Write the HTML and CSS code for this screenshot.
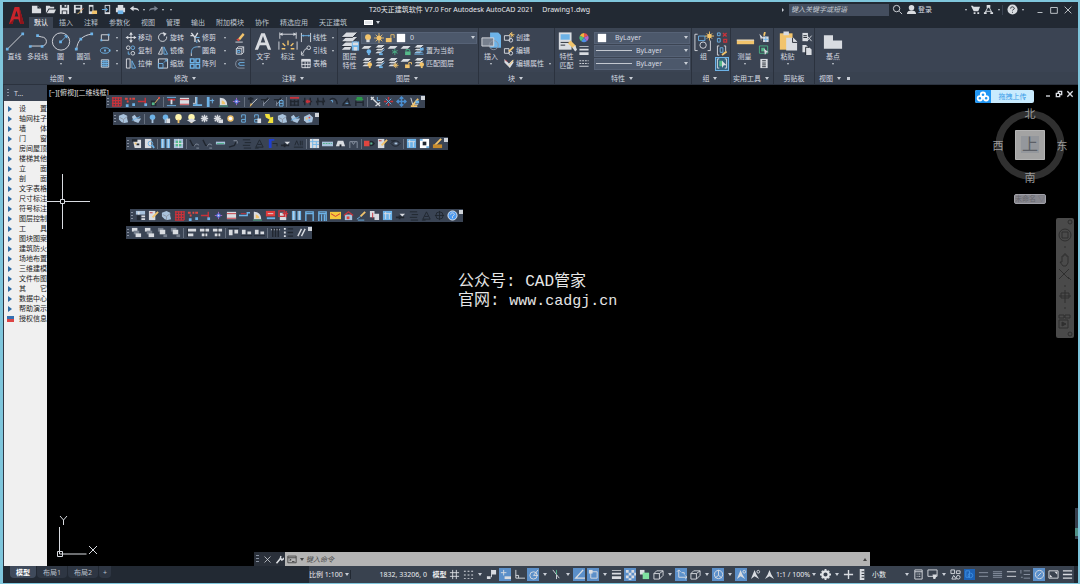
FILE: index.html
```html
<!DOCTYPE html>
<html lang="zh-CN">
<head>
<meta charset="utf-8">
<title>T20天正建筑软件 V7.0 For Autodesk AutoCAD 2021</title>
<link rel="stylesheet" href="styles.css">
</head>
<body>
<svg class="sprite" aria-hidden="true">
  <!-- files -->
  <symbol id="new" viewBox="0 0 12 12"><path class="w" d="M1 2h6l4 3v5H1z"/><path class="k" d="M7 2v3h4z"/></symbol>
  <symbol id="open" viewBox="0 0 12 12"><path class="w" d="M1 10V2h4l1 1h4v2H4zM4.500 6H12l-2 4H2z"/></symbol>
  <symbol id="save" viewBox="0 0 12 12"><path class="w" d="M1 1h10v10H1z"/><path class="k" d="M3 1h6v3H3zM3 7h6v4H3z"/><path class="w" d="M4 8h4v3H4zM6 1h2v2H6z"/></symbol>
  <symbol id="saveas" viewBox="0 0 12 12"><path class="w" d="M1 1h9v9H1z"/><path class="k" d="M3 2h5v2H3zM3 6h5v4H3z"/><path class="ys" d="M5 11l6-6"/><path class="rs" d="M10 6l1-1"/></symbol>
  <symbol id="webopen" viewBox="0 0 12 12"><path class="w" d="M2 1h5v10H2z"/><path class="k" d="M3 3h3v5H3z"/><path class="y" d="M6 7h5v4H5z"/></symbol>
  <symbol id="websave" viewBox="0 0 12 12"><path class="w" d="M4 1h6v10H4z"/><path class="k" d="M5 2h4v7H5z"/><path class="bs" d="M1 6h6M5 4l2 2-2 2"/></symbol>
  <symbol id="print" viewBox="0 0 12 12"><path class="w" d="M3 1h6v3H3zM1 4h10v5H1z"/><path class="b" d="M3 7h6v4H3z"/></symbol>
  <symbol id="undo" viewBox="0 0 12 12"><path class="w" d="M1 5l4-3v2c4 0 6 1 6 4-2-2-3-2-6-2v2z"/></symbol>
  <symbol id="redo" viewBox="0 0 12 12"><path class="d" d="M11 5L7 2v2C3 4 1 5 1 8c2-2 3-2 6-2v2z"/></symbol>
  <!-- title bar -->
  <symbol id="find" viewBox="0 0 12 12"><circle class="ws" cx="5" cy="5" r="3.500"/><path class="ws" d="M8 8l3 3"/></symbol>
  <symbol id="user" viewBox="0 0 12 12"><circle class="w" cx="6" cy="4" r="3"/><path class="w" d="M1 11c0-3 2-4 5-4s5 1 5 4z"/></symbol>
  <symbol id="cart" viewBox="0 0 12 12"><path class="w" d="M1 2h2l1 1h7L9 8H4zM4 9h2v2H4zM8 9h2v2H8z"/></symbol>
  <symbol id="auto" viewBox="0 0 12 12"><path class="ws" d="M6 2L2 10M6 2l4 8M3 8h6"/><path class="w" d="M4 1h4v3H4zM1 9h3v2H1zM8 9h3v2H8z"/></symbol>
  <symbol id="help" viewBox="0 0 12 12"><circle class="w" cx="6" cy="6" r="5.500"/><path class="ks" d="M4 5c0-3 4-2 4 0 0 1-2 1-2 2M6 8.500v1"/></symbol>
  <symbol id="min" viewBox="0 0 12 12"><path class="ws" d="M3 9h6"/></symbol>
  <symbol id="max" viewBox="0 0 12 12"><path class="ws" d="M2 3h8v7H2z"/></symbol>
  <symbol id="rest" viewBox="0 0 12 12"><path class="ws" d="M2 5h5v5H2zM5 4V2h5v5H8"/></symbol>
  <symbol id="close" viewBox="0 0 12 12"><path class="ws" d="M2 2l8 8M10 2l-8 8"/></symbol>
  <!-- draw -->
  <symbol id="line" viewBox="0 0 22 22"><path class="ws" d="M3 19L19 3"/><path class="b" d="M1 18h3v3H1zM18 1h3v3h-3z"/></symbol>
  <symbol id="pline" viewBox="0 0 22 22"><path class="ws" d="M3 16h12c7 0 7-10 0-10l-4-1"/><path class="b" d="M1 15h3v3H1zM9 3h3v3H9zM14 15h3v3h-3z"/></symbol>
  <symbol id="circle" viewBox="0 0 22 22"><circle class="ws" cx="11" cy="11" r="9.500"/><path class="bs" d="M11 11l5-5"/><path class="b" d="M9 10h3v3H9zM14 4h4v4z"/></symbol>
  <symbol id="arc" viewBox="0 0 22 22"><path class="ws" d="M3 20C3 10 10 4 19 3"/><path class="b" d="M1 18h3v3H1zM6 7h3v3H6zM18 1h3v3h-3z"/></symbol>
  <symbol id="rect" viewBox="0 0 12 12"><path class="ws" d="M2 3h8v6H2z"/><path class="b" d="M1 8h2v2H1zM9 2h2v2H9z"/></symbol>
  <symbol id="ellipse" viewBox="0 0 12 12"><ellipse class="bs" cx="6" cy="6" rx="5" ry="3"/><path class="b" d="M5 5h2v2H5zM10 5h2v2h-2z"/></symbol>
  <symbol id="hatch" viewBox="0 0 12 12"><path class="ws" d="M2 2h8v8H2z"/><path class="bs" d="M2 4h8M2 6h8M2 8h8M4 2v8M6 2v8M8 2v8"/></symbol>
  <!-- modify -->
  <symbol id="move" viewBox="0 0 12 12"><path class="ws" d="M6 1v10M1 6h10"/><path class="w" d="M6 0l2 3H4zM6 12l2-3H4zM0 6l3-2v4zM12 6L9 4v4z"/></symbol>
  <symbol id="rotate" viewBox="0 0 12 12"><path class="ws" d="M8 2a4.500 4.500 0 1 0 2 3"/><path class="w" d="M6 0l4 2-3 3z"/></symbol>
  <symbol id="trim" viewBox="0 0 12 12"><path class="ws" stroke-width="1.500" d="M2 1l4 5v5M9 1L6 6M9 8l2 3M1 4h3"/><path class="bs" d="M7 6h4M8 9v3"/></symbol>
  <symbol id="erase" viewBox="0 0 12 12"><path class="y" d="M4 7l5-6 2 2-5 6z"/><path class="r" d="M2 8l2-1 2 2-2 1z"/><path class="ws" d="M1 11h8"/></symbol>
  <symbol id="copy" viewBox="0 0 12 12"><circle class="ws" cx="3" cy="3" r="2"/><circle class="bs" cx="8" cy="3" r="2"/><circle class="ws" cx="8" cy="9" r="2"/><path class="bs" d="M3 7v3h2"/></symbol>
  <symbol id="mirror" viewBox="0 0 12 12"><path class="ws" d="M5 2v8H1z"/><path class="bs" d="M7 2v8h4z"/></symbol>
  <symbol id="fillet" viewBox="0 0 12 12"><path class="bs" d="M2 9c0-5 2-7 7-7"/><path class="ws" d="M2 12V9M9 2h3"/></symbol>
  <symbol id="explode" viewBox="0 0 12 12"><path class="ws" d="M2 4h6v6H2zM2 4l2-2h6v6L8 10M8 4l2-2"/><path class="bs" d="M3 6h3v2H3z"/></symbol>
  <symbol id="stretch" viewBox="0 0 12 12"><path class="ws" d="M1 1h4v10H1z"/><path class="bs" d="M7 3l4 8H7z"/></symbol>
  <symbol id="scale" viewBox="0 0 12 12"><path class="ws" d="M1 1h10v10H1z"/><path class="bs" d="M1 6h5v5H1zM7 5l3-3M8 2h2v2"/></symbol>
  <symbol id="array" viewBox="0 0 12 12"><path class="bs" stroke-width="1.500" d="M1 1h4v4H1zM7 1h4v4H7zM1 7h4v4H1zM7 7h4v4H7z"/></symbol>
  <symbol id="offset" viewBox="0 0 12 12"><path class="ds" d="M11 2H5C0 2 0 11 5 11h6"/><path class="bs" d="M11 5H6C4 5 4 8 6 8h5"/></symbol>
  <!-- annotate -->
  <symbol id="bigA" viewBox="0 0 22 22"><path class="w" d="M9 2h4l7 18h-3.500l-2-5H7.500l-2 5H2zM8.500 12h5L11 5z"/></symbol>
  <symbol id="dim" viewBox="0 0 22 22"><path class="ws" d="M2 1v7M20 1v7M2 3h18M1 20V11M21 20V11"/><path class="ys" stroke-width="1.500" d="M11 10v5M5 13l3 3M17 13l-3 3M4 19h4M14 19h4"/><path class="w" d="M2 3l3-2v4zM20 3l-3-2v4z"/></symbol>
  <symbol id="dimlin" viewBox="0 0 12 12"><path class="ws" d="M1 1v10M11 1v10"/><path class="bs" d="M1 4h10M3 3v2M9 3v2"/></symbol>
  <symbol id="leader" viewBox="0 0 12 12"><circle class="ws" cx="9" cy="3" r="2"/><path class="ws" d="M7 4C4 4 4 7 2 10M1 7v4h3"/></symbol>
  <symbol id="table" viewBox="0 0 12 12"><path class="w" d="M1 1h10v3H1z"/><path class="ws" d="M1.500 2h9v8.500h-9zM5 4v7M8 4v7M1 7h10"/></symbol>
  <!-- layers -->
  <symbol id="layers" viewBox="0 0 22 22"><path class="w" d="M7 1h12l-5 5H2zM7 6h12l-5 5H2zM7 11h12l-5 5H2zM7 15h6l-2 5H2z"/><path class="ks" d="M2 6.500h12l5-5M2 11.500h12l5-5M2 16.500h10"/><path class="b" d="M13 11h8v10h-8z"/><path class="w" d="M14 12h6v3h-6zM15 17h4v4h-4z"/></symbol>
  <symbol id="lay" viewBox="0 0 12 12"><path class="w" d="M4 0h7L8 3H1zM4 3h7L8 6H1zM4 6h5L7 9H1z"/><path class="ks" d="M1 3.500h7l2-2M1 6.500h7"/></symbol>
  <symbol id="lay-b" viewBox="0 0 12 12"><path class="w" d="M3 1h8L8 4H0z"/><circle class="b" cx="8" cy="7" r="2.500"/><path class="b" d="M7 9h2v2H7z"/></symbol>
  <symbol id="lay-m" viewBox="0 0 12 12"><use href="#lay"/><path class="bs" d="M6 9l5-4"/><path class="b" d="M5 9h4v2H5z"/></symbol>
  <symbol id="lay-f" viewBox="0 0 12 12"><path class="w" d="M3 1h8L8 4H0z"/><path class="gs" d="M8 4v7M5 6l6 3M11 6L5 9"/></symbol>
  <symbol id="lay-l" viewBox="0 0 12 12"><path class="w" d="M3 1h8L8 4H0z"/><path class="g" d="M5 7h6v4H5z"/><path class="gs" d="M6 7V5h4v2"/></symbol>
  <symbol id="lay-c" viewBox="0 0 12 12"><use href="#lay"/><path class="bs" d="M1 10h10M2 8h8"/><path class="b" d="M7 3h4v3H7z"/></symbol>
  <symbol id="lay-y" viewBox="0 0 12 12"><use href="#lay"/><circle class="y" cx="9" cy="7" r="2.500"/><path class="y" d="M8 9h2v2H8z"/></symbol>
  <symbol id="lay-s" viewBox="0 0 12 12"><use href="#lay"/><path class="ys" d="M9 5v6M6 8h6M7 6l4 4M11 6l-4 4"/></symbol>
  <symbol id="lay-u" viewBox="0 0 12 12"><path class="w" d="M3 1h8L8 4H0z"/><path class="y" d="M5 7h5v4H5z"/><path class="ys" d="M9 7V5h3v2"/></symbol>
  <symbol id="bulb" viewBox="0 0 12 12"><circle class="y" cx="6" cy="5" r="3.500"/><path class="w" d="M4 8h4v3H4z"/></symbol>
  <symbol id="sun" viewBox="0 0 12 12"><circle class="y" cx="6" cy="6" r="3"/><path class="ys" d="M6 0v12M0 6h12M2 2l8 8M10 2l-8 8"/></symbol>
  <symbol id="unlock" viewBox="0 0 12 12"><path class="y" d="M1 6h7v5H1z"/><path class="ys" d="M7 6V2h4v4"/></symbol>
  <symbol id="white" viewBox="0 0 12 12"><path fill="#fff" d="M1 1h10v10H1z"/></symbol>
  <!-- block -->
  <symbol id="insert" viewBox="0 0 22 22"><path class="b" d="M10 1h9l3 3v14H10z"/><path class="d" d="M1 7h13v9H1z"/><circle class="ds" cx="14" cy="15" r="5"/><path class="ws" d="M1 7h13v9H1z"/></symbol>
  <symbol id="create" viewBox="0 0 12 12"><path class="ws" d="M1 4h6v5H1z"/><circle class="ws" cx="8" cy="9" r="2"/><path class="ys" d="M9 0v6M6 3h6M7 1l4 4"/></symbol>
  <symbol id="edit" viewBox="0 0 12 12"><path class="ws" d="M1 4h5v5H1z"/><circle class="ws" cx="8" cy="9" r="2"/><path class="ys" stroke-width="2" d="M6 7l5-5"/></symbol>
  <symbol id="attr" viewBox="0 0 12 12"><path class="w" d="M1 1l5 5 4-4 1 3-4 6-6-6z"/><path class="ys" d="M6 8l5-6"/><path class="rs" d="M2 2l2 2"/></symbol>
  <!-- properties -->
  <symbol id="match" viewBox="0 0 22 22"><path class="w" d="M2 1h14v19H2z"/><path class="b" d="M4 3h10v6H4z"/><path class="ks" d="M4 12h10M4 15h5"/><path class="y" d="M12 13l3-3 6 6-3 3z"/><path class="w" d="M17 18l3-3 2 5-2 2z"/></symbol>
  <symbol id="wheel" viewBox="0 0 12 12"><path fill="#e8554d" d="M6 6V1a5 5 0 0 1 4.500 3z"/><path fill="#b565c9" d="M6 6l4.500-2A5 5 0 0 1 9 10z"/><path fill="#4f8fe6" d="M6 6l3 4a5 5 0 0 1-6 0z"/><path fill="#4fc27c" d="M6 6l-3 4A5 5 0 0 1 1.500 4z"/><path fill="#f0b63f" d="M6 6L1.500 4A5 5 0 0 1 6 1z"/></symbol>
  <symbol id="lw" viewBox="0 0 12 12"><path class="w" d="M1 1h10v1H1zM1 4h10v2H1zM1 8h10v3H1z"/></symbol>
  <symbol id="lt" viewBox="0 0 12 12"><path class="ws" stroke-dasharray="2 1" d="M1 3h10M1 6h10"/><path class="ws" d="M1 9h10"/></symbol>
  <!-- groups, utilities, clipboard, view -->
  <symbol id="group" viewBox="0 0 22 22"><path class="ws" d="M4 3H1v18h3M15 21h3V10"/><path class="bs" d="M5 5h7v5H5z"/><circle class="ws" cx="10" cy="15" r="3.500"/><path class="ys" d="M17 0v10M12 5h10M14 2l6 6M20 2l-6 6"/><circle class="y" cx="17" cy="5" r="2.500"/></symbol>
  <symbol id="ungroup" viewBox="0 0 12 12"><path class="bs" d="M1 1h3v3H1zM1 7h3v4H1z"/><path class="rs" stroke-width="1.500" d="M7 1l4 4M11 1L7 5M8 8h3v3H8z"/></symbol>
  <symbol id="gedit" viewBox="0 0 12 12"><path class="ws" d="M3 1H1v10h2M8 1h2v6"/><path class="bs" d="M4 3h3v5H4z"/><path class="ys" stroke-width="2" d="M6 11l5-4"/></symbol>
  <symbol id="gsel" viewBox="0 0 12 12"><path class="ws" d="M3 1H1v10h2M9 1h2v10H9"/><path class="g" d="M3 3h4v6H3z"/><path class="w" d="M6 3l5 5H8l-2 3z"/></symbol>
  <symbol id="ruler" viewBox="0 0 22 22"><path class="y" d="M2 9h19v5H2z"/><path class="w" d="M2 9h19v1H2z"/></symbol>
  <symbol id="qsel" viewBox="0 0 12 12"><path class="w" d="M1 2l5 5H3v3zM5 5h6v6H5z"/><path class="bs" d="M5 8h6M8 5v6"/><path class="ys" stroke-width="2" d="M7 0L6 4"/></symbol>
  <symbol id="selall" viewBox="0 0 12 12"><path class="gs" d="M1 1h9v8H1z"/><path class="g" d="M3 3h4v4H3z"/><path class="w" d="M6 4l5 4H9l-2 3z"/></symbol>
  <symbol id="calc" viewBox="0 0 12 12"><path class="w" d="M2 1h8v10H2z"/><path class="ks" d="M4 3h4M4 5.500h4M4 7.500h4M4 9.500h4"/></symbol>
  <symbol id="paste" viewBox="0 0 22 22"><path class="y" d="M2 2h14v18H2z"/><path class="w" d="M6 0h6v4H6zM9 7h8l4 4v10H9z"/><path class="ks" d="M16 7v5h5"/></symbol>
  <symbol id="cut" viewBox="0 0 12 12"><path class="w" d="M1 1h6v9H1z"/><path class="ks" d="M2 4h4M2 6h4"/><path class="ws" d="M6 4l5 6M11 4l-5 6"/></symbol>
  <symbol id="copyclip" viewBox="0 0 12 12"><path class="w" d="M1 0h4l2 2v6H1z"/><path class="w" d="M5 3h4l2 2v6H5z"/><path class="ks" d="M4.500 11V2.500H8"/></symbol>
  <symbol id="base" viewBox="0 0 22 22"><path class="w" d="M1 4h10v6h10v9H1z"/></symbol>
  <!-- floating toolbars -->
  <symbol id="t-grid" viewBox="0 0 12 12"><path class="rs" stroke-width="1.500" d="M1 2h10M1 5h10M1 8h10M1 11h10M2 1v10M5 1v10M8 1v10M11 1v10"/></symbol>
  <symbol id="t-col" viewBox="0 0 12 12"><path class="r" d="M1 2h3v2H1zM6 2h2v2H6zM9 2h3v2H9zM3 5h2v2H3z"/><path class="b" d="M2 9h3v3H2zM9 8h3v3H9z"/></symbol>
  <symbol id="t-col2" viewBox="0 0 12 12"><path class="rs" stroke-width="1.500" d="M1 6h8M9 2v8"/><path class="b" d="M8 8h3v3H8z"/></symbol>
  <symbol id="t-pick" viewBox="0 0 12 12"><path class="k" d="M1 5h6v6H1z"/><path class="ys" d="M5 8l5-6"/><path class="g" d="M2 7h3v3H2z"/><path class="r" d="M9 1h2v2H9z"/></symbol>
  <symbol id="t-wall" viewBox="0 0 12 12"><path class="bs" d="M1 1.500h10M1 10.500h10"/><path class="rs" stroke-width="2" d="M2 4h8"/><path class="w" d="M5 4h2v5H5z"/></symbol>
  <symbol id="t-box" viewBox="0 0 12 12"><path class="w" d="M1 2h10v8H1z"/><path class="rs" d="M1 4h10M1 9h10"/></symbol>
  <symbol id="t-perp" viewBox="0 0 12 12"><path class="bs" stroke-width="2" d="M1 10h10M5 1v9"/><path class="ws" d="M1 8h3V1"/></symbol>
  <symbol id="t-side" viewBox="0 0 12 12"><path class="b" d="M2 1h3v11H2z"/><path class="bs" d="M5 5h5M8 3v5"/></symbol>
  <symbol id="t-door" viewBox="0 0 12 12"><path class="w" d="M2 2c5 0 8 3 8 8H2z"/><path class="y" d="M4 5c2 0 4 2 4 4H4z"/><path class="gs" d="M1 11h10"/></symbol>
  <symbol id="t-node" viewBox="0 0 12 12"><path class="ps" d="M6 2v8M2 6h8"/><path fill="#4460e8" d="M4 4h4v4H4z"/><path class="w" d="M5 5h2v2H5z"/></symbol>
  <symbol id="t-brush" viewBox="0 0 12 12"><path class="ks" stroke-width="2" d="M1 3h6M4 1v6"/><path class="ws" d="M5 9l6-6"/><path class="y" d="M4 8l2 1-3 3z"/></symbol>
  <symbol id="t-brush2" viewBox="0 0 12 12"><path class="ks" stroke-width="1.500" d="M1 4h9M3 8l6-6"/><path class="ds" d="M4 9l6-6M4 11V6"/></symbol>
  <symbol id="t-brush3" viewBox="0 0 12 12"><use href="#t-brush2"/><path class="bs" d="M7 5h4v6H7zM7 8h4"/></symbol>
  <symbol id="t-dim" viewBox="0 0 12 12"><path class="rs" stroke-width="2" d="M1 2h10"/><path class="ks" stroke-width="1.500" d="M1 6h10M2 4v7M6 4v7M10 4v7M1 10h10"/></symbol>
  <symbol id="t-dimr" viewBox="0 0 12 12"><path class="ks" stroke-width="1.500" d="M1 6h10M3 2v8M9 2v8"/><path class="rs" stroke-width="2" d="M4 6h5M6 4v4"/></symbol>
  <symbol id="t-dimk" viewBox="0 0 12 12"><path class="ks" stroke-width="1.500" d="M1 6h10M3 2v8M9 2v8M4 4L2 8M10 4L8 8"/></symbol>
  <symbol id="t-arck" viewBox="0 0 12 12"><path class="ks" stroke-width="1.500" d="M2 4c3-3 8-1 8 5"/><path class="bs" d="M3 5h2v2"/></symbol>
  <symbol id="t-ang" viewBox="0 0 12 12"><path class="ks" stroke-width="1.500" d="M1 10h10M2 9l6-7M7 4c2 1 2 4 2 6"/><path class="bs" d="M5 8h3"/></symbol>
  <symbol id="t-green" viewBox="0 0 12 12"><path stroke="#2c9a4a" stroke-width="2" d="M2 4h8M3 2h6"/><path class="ks" stroke-width="1.500" d="M2 5v6M10 5v6M2 7h8"/></symbol>
  <symbol id="t-snap" viewBox="0 0 12 12"><path class="ws" stroke-width="1.500" d="M1 1l10 10M1 4l3-3M6 11l5-4"/><path class="bs" d="M8 1v4h3"/></symbol>
  <symbol id="t-flower" viewBox="0 0 12 12"><path class="rs" stroke-width="1.500" d="M6 1v3M1 6h3M11 6H8M6 11V8"/><path class="bs" d="M3 3l6 6M9 3l-6 6"/></symbol>
  <symbol id="t-move" viewBox="0 0 12 12"><path stroke="#4a8ed0" fill="none" stroke-width="1.500" d="M6 1v10M1 6h10M4 3l2-2 2 2M4 9l2 2 2-2M3 4L1 6l2 2M9 4l2 2-2 2"/></symbol>
  <symbol id="t-paint" viewBox="0 0 12 12"><path class="ws" d="M2 2l2 7h6"/><path class="ys" stroke-width="2" d="M4 10l6-7M2 11h7"/><path class="b" d="M7 5h4v3H7z"/></symbol>
  <symbol id="t-cube" viewBox="0 0 12 12"><path class="l" d="M1 3l5-2 4 2v3l1 4-4 1-3-1-3-3z"/><path class="ds" d="M2 5l4 2 4-3M6 7v4"/></symbol>
  <symbol id="t-swap" viewBox="0 0 12 12"><path class="l" d="M1 4l3-2 3 4h4L8 11 3 9z"/><path class="bs" d="M1 8l9-4"/></symbol>
  <symbol id="t-bulbb" viewBox="0 0 12 12"><circle class="b" cx="6" cy="4.500" r="3"/><path class="l" d="M5 7h2v4H5z"/></symbol>
  <symbol id="t-bulbp" viewBox="0 0 12 12"><use href="#t-bulbb"/><path class="w" d="M7 6h4v5H7z"/></symbol>
  <symbol id="t-bulby" viewBox="0 0 12 12"><circle fill="#fff6b0" cx="6" cy="4.500" r="3.500"/><path class="y" d="M5 7h2v4H5z"/></symbol>
  <symbol id="t-bulbl" viewBox="0 0 12 12"><use href="#t-bulby"/><path class="w" d="M1 8l5-2 5 2-5 3z"/></symbol>
  <symbol id="t-snow" viewBox="0 0 12 12"><path class="ws" stroke-width="1.500" d="M6 2v8M2 6h8M3 3l6 6M9 3l-6 6"/></symbol>
  <symbol id="t-snowp" viewBox="0 0 12 12"><use href="#t-snow"/><path class="w" d="M7 7h5v4H7z"/></symbol>
  <symbol id="t-sun" viewBox="0 0 12 12"><circle class="y" cx="6" cy="6" r="3.500"/><circle fill="#fff" cx="6" cy="6" r="2"/></symbol>
  <symbol id="t-lock" viewBox="0 0 12 12"><path class="bs" d="M4 5V2h4v8H4V7h4"/></symbol>
  <symbol id="t-lockp" viewBox="0 0 12 12"><use href="#t-lock"/><path class="w" d="M7 6h4v5H7z"/></symbol>
  <symbol id="t-key" viewBox="0 0 12 12"><path fill="#f2e23c" d="M1 1h5l1 4 3-1v7H4l2-4-4-2z"/></symbol>
  <symbol id="t-pal" viewBox="0 0 12 12"><path class="l" d="M1 4l6-3 4 4-1 5-6 1-3-3z"/><circle class="y" cx="4" cy="6" r="1"/><circle class="r" cx="7" cy="5" r="1"/><circle class="b" cx="7" cy="8" r="1"/></symbol>
  <symbol id="t-man" viewBox="0 0 12 12"><path class="w" d="M2 2h9v9H4z"/><path class="k" d="M1 1h6v3H1zM6 6h3v2H6z"/><path class="y" d="M4 5h2v2H4z"/></symbol>
  <symbol id="t-mgr" viewBox="0 0 12 12"><path class="l" d="M1 1h10v4H1z"/><path class="k" d="M2 6h4v5H2z"/><path class="w" d="M7 6h4v2H7zM7 9h4v2H7zM3 2h2v3H3z"/></symbol>
  <symbol id="t-zoom" viewBox="0 0 12 12"><path class="w" d="M1 1h7v10H1z"/><circle class="bs" cx="7" cy="6" r="2.500"/><path class="bs" stroke-width="2" d="M9 8l2 3"/></symbol>
  <symbol id="t-win" viewBox="0 0 12 12"><path class="b" d="M1 1h4v10H1zM7 1h4v10H7z"/><path class="ws" d="M3 1v10M9 1v10"/></symbol>
  <symbol id="t-wing" viewBox="0 0 12 12"><path class="l" d="M1 1h10v10H1z"/><path class="g" d="M3 3h6v6H3z"/><path class="ws" d="M1 6h10M6 1v10"/></symbol>
  <symbol id="t-st1" viewBox="0 0 12 12"><path class="ks" stroke-width="1.500" d="M1 2l3 6h3"/><path class="ds" d="M6 9c1-4 4-2 5-1M8 11h3"/></symbol>
  <symbol id="t-st2" viewBox="0 0 12 12"><path class="ks" stroke-width="1.500" d="M1 10l6-2 2-4 2-1"/><path class="ds" d="M6 3h4v3"/></symbol>
  <symbol id="t-beam" viewBox="0 0 12 12"><path class="l" d="M1 4h10v3H1z"/><path class="gs" d="M2 6h8"/></symbol>
  <symbol id="t-line" viewBox="0 0 12 12"><path class="bs" stroke-width="1.500" d="M0 6h9V3h3"/><path class="rs" d="M2 4h6"/></symbol>
  <symbol id="t-txt" viewBox="0 0 12 12"><path class="ks" d="M2 2h8M4 5h7M2 8h8M3 11h8"/></symbol>
  <symbol id="t-tri" viewBox="0 0 12 12"><path class="ks" d="M6 2L2 10h8zM4 7h4M1 11h4"/></symbol>
  <symbol id="t-blue" viewBox="0 0 12 12"><path fill="#1f3fd0" d="M2 1h6v2H5v8H2z"/><path class="ks" d="M6 6h5v3"/></symbol>
  <symbol id="t-pen" viewBox="0 0 12 12"><path class="ks" stroke-width="2" d="M1 8h9M5 10V6"/><path class="w" d="M5 4h6l-3 3z"/></symbol>
  <symbol id="t-ai" viewBox="0 0 12 12"><path class="ks" d="M2 8l2-5 2 5M8 3v5M10 3v5M1 10h10"/></symbol>
  <symbol id="t-tbl" viewBox="0 0 12 12"><path class="w" d="M1 1h10v10H1z"/><path class="bs" d="M1 4h10M4 1v10M4 7h7M8 4v7"/></symbol>
  <symbol id="t-strip" viewBox="0 0 12 12"><path class="l" d="M0 4h12v5H0z"/><path class="gs" stroke-dasharray="2 1" d="M1 6h10"/></symbol>
  <symbol id="t-roof" viewBox="0 0 12 12"><path class="w" d="M3 3h6l2 6H1z"/><path class="k" d="M5 7h2v3H5z"/></symbol>
  <symbol id="t-gate" viewBox="0 0 12 12"><path class="ds" d="M2 11V4h8v7M4 4l2 3 2-3"/></symbol>
  <symbol id="t-eyer" viewBox="0 0 12 12"><path class="ks" stroke-width="1.500" d="M4 6c2-3 5-3 7 0-2 3-5 3-7 0z"/><path class="r" d="M0 3h6v6H0z"/><path class="g" d="M7 5h2v2H7z"/></symbol>
  <symbol id="t-note" viewBox="0 0 12 12"><path class="w" d="M1 1h7v10H1z"/><path class="ys" stroke-width="2" d="M5 8l6-6"/><path class="rs" d="M2 3h3"/></symbol>
  <symbol id="t-eye" viewBox="0 0 12 12"><path class="ks" d="M1 6c3-4 7-4 10 0-3 4-7 4-10 0zM1 3h5"/><path class="l" d="M5 5h3v2H5z"/></symbol>
  <symbol id="t-blk" viewBox="0 0 12 12"><path class="b" d="M1 1h10v10H1z"/><path class="ws" d="M2 4h8M4 2v8M8 4v6"/></symbol>
  <symbol id="t-sq" viewBox="0 0 12 12"><path fill="#fff" d="M1 1h10v10H1z"/><path class="k" d="M4 4h4v4H4z"/><path class="b" d="M1 1h3v2H1zM8 9h3v2H8z"/></symbol>
  <symbol id="t-gold" viewBox="0 0 12 12"><path class="ys" stroke-width="2" d="M3 8l7-7"/><path fill="#c58a2c" d="M1 7h10v4H1z"/></symbol>
  <symbol id="t-red" viewBox="0 0 12 12"><path fill="#e03a3a" d="M1 1h10v6H1z"/><path class="ws" d="M3 4h6"/><path class="b" d="M2 8h9v2H2z"/></symbol>
  <symbol id="t-redp" viewBox="0 0 12 12"><path class="w" d="M2 3h7v8H2z"/><path class="rs" stroke-width="1.500" d="M1 1h6v6H1zM5 4h6M9 1v7"/></symbol>
  <symbol id="t-frame" viewBox="0 0 12 12"><path class="bs" stroke-width="1.500" d="M2 12V2h8v10M2 4h8"/></symbol>
  <symbol id="t-frame2" viewBox="0 0 12 12"><path class="bs" stroke-width="1.500" d="M2 12V2h8v10M5 5v7M8 5v7M2 4h8"/></symbol>
  <symbol id="t-mail" viewBox="0 0 12 12"><path fill="#f5c83c" d="M0 2h12v8H0z"/><path class="rs" d="M1 4l5 3 5-3"/></symbol>
  <symbol id="t-house" viewBox="0 0 12 12"><path class="l" d="M2 5h8v6H2z"/><path class="rs" stroke-width="1.500" d="M1 6l5-4 5 4"/><path class="r" d="M4 7h3v3H4z"/></symbol>
  <symbol id="t-pencil" viewBox="0 0 12 12"><path class="ys" stroke-width="2" d="M5 7l5-5"/><path class="bs" d="M1 10l4-3M2 11h7"/></symbol>
  <symbol id="t-pages" viewBox="0 0 12 12"><path class="w" d="M1 1h5v7H1zM6 4h5v7H6z"/><path class="rs" d="M4 3v6"/></symbol>
  <symbol id="t-q" viewBox="0 0 12 12"><circle fill="#4d9af0" stroke="#e6effb" cx="6" cy="6" r="5"/><path class="ws" d="M4 5c0-3 4-2 4 0L6 7v2"/></symbol>
  <symbol id="t-wheel" viewBox="0 0 12 12"><circle class="ks" cx="6" cy="6" r="4"/><path class="ks" d="M6 1v10M1 6h10"/></symbol>
  <symbol id="t-ordA" viewBox="0 0 12 12"><path class="w" d="M1 1h6v4H1z"/><path class="d" d="M3 4h6v4H3z"/><path class="w" d="M5 7h6v4H5z"/></symbol>
  <symbol id="t-ordB" viewBox="0 0 12 12"><path class="d" d="M1 1h6v4H1z"/><path class="w" d="M3 3h6v5H3z"/><path class="d" d="M7 8h4v3H7z"/></symbol>
  <symbol id="t-alL" viewBox="0 0 12 12"><path class="w" d="M2 2h9v3H2zM2 7h6v3H2z"/><path class="k" d="M1 1h1v10H1z"/></symbol>
  <symbol id="t-alC" viewBox="0 0 12 12"><path class="w" d="M1 2h10v3H1zM3 7h6v3H3z"/><path class="k" d="M6 0h1v12H6z"/></symbol>
  <symbol id="t-alT" viewBox="0 0 12 12"><path class="w" d="M1 3h4v6H1zM7 3h4v4H7z"/><path class="k" d="M0 1h12v1H0z"/></symbol>
  <symbol id="t-alB" viewBox="0 0 12 12"><path class="w" d="M1 3h4v5H1zM7 5h4v3H7z"/><path class="k" d="M0 9h12v1H0z"/></symbol>
  <symbol id="t-rows" viewBox="0 0 12 12"><path class="ws" stroke-dasharray="2 1" d="M1 3h10"/><path class="ks" stroke-width="1.500" d="M3 1v10M6 1v10M9 1v10"/></symbol>
  <symbol id="t-list" viewBox="0 0 12 12"><path class="w" d="M1 1h2v2H1zM1 5h2v2H1zM1 9h2v2H1z"/><path class="ks" stroke-width="1.500" d="M5 2h6M5 6h6M5 10h6"/></symbol>
  <symbol id="t-par" viewBox="0 0 12 12"><path class="ws" stroke-width="1.500" d="M2 10l4-8M6 10l4-8"/></symbol>
  <!-- status bar -->
  <symbol id="s-grid" viewBox="0 0 12 12"><path class="ws" d="M4 1v10M8 1v10M1 4h10M1 8h10"/></symbol>
  <symbol id="s-dots" viewBox="0 0 12 12"><path class="w" d="M1 2h2v1H1zM5 2h2v1H5zM9 2h2v1H9zM1 6h2v1H1zM5 6h2v1H5zM9 6h2v1H9zM1 10h2v1H1zM5 10h2v1H5zM9 10h2v1H9z"/></symbol>
  <symbol id="s-infer" viewBox="0 0 12 12"><path class="w" d="M1 8h4v3H1zM6 1h5v5H6z"/><path class="ws" d="M6 1v8"/></symbol>
  <symbol id="s-dyn" viewBox="0 0 12 12"><path class="ws" d="M1 4h6M4 1v6"/><path class="w" d="M5 8h7v3H5z"/></symbol>
  <symbol id="s-ortho" viewBox="0 0 12 12"><path class="ws" d="M2 1v9h10M2 7h3v3"/></symbol>
  <symbol id="s-polar" viewBox="0 0 12 12"><circle class="ws" cx="6" cy="7" r="4"/><path class="ws" d="M6 7l5-6M6 7h5"/></symbol>
  <symbol id="s-iso" viewBox="0 0 12 12"><path class="ws" d="M2 1l7 9M6 6v5"/><path class="gs" d="M6 1v5"/></symbol>
  <symbol id="s-track" viewBox="0 0 12 12"><path class="ws" stroke-width="1.500" d="M10 1L2 10h10"/></symbol>
  <symbol id="s-osnap" viewBox="0 0 12 12"><path class="ws" d="M3 3h7v7H3z"/><path class="w" d="M1 1h4v4H1z"/></symbol>
  <symbol id="s-lw" viewBox="0 0 12 12"><path class="w" d="M1 1h10v1H1zM1 4h10v2H1zM1 8h10v3H1z"/></symbol>
  <symbol id="s-trans" viewBox="0 0 12 12"><path class="w" d="M1 1h3v3H1zM7 1h3v3H7zM4 4h3v3H4zM10 4h2v3h-2zM1 7h3v3H1zM7 7h3v3H7zM4 10h3v2H4z"/></symbol>
  <symbol id="s-cyc" viewBox="0 0 12 12"><path class="w" d="M1 1h5v5H1z"/><path fill="#7fe0a0" d="M4 4h7v7H4z"/></symbol>
  <symbol id="s-cube" viewBox="0 0 12 12"><path class="ws" d="M1 5h6v6H1zM1 5l3-3h7v5l-4 4M7 5l4-3"/></symbol>
  <symbol id="s-ucs" viewBox="0 0 12 12"><path class="ws" d="M3 1v8h9M1 3l2-2 2 2M10 7l2 2-2 2M6 4h3v2"/></symbol>
  <symbol id="s-giz" viewBox="0 0 12 12"><circle class="ws" cx="6" cy="6" r="4.500"/><path class="ws" d="M6 1v6l-4 3M6 7l4 3"/></symbol>
  <symbol id="s-ann" viewBox="0 0 12 12"><path class="w" d="M6 1l2 5 3 5-5-3-5 3 3-5z"/></symbol>
  <symbol id="s-annp" viewBox="0 0 12 12"><path class="w" d="M5 1l2 5 3 5-5-3-4 3 2-5z"/><circle class="ws" cx="9" cy="3" r="1.500"/></symbol>
  <symbol id="s-gear" viewBox="0 0 12 12"><circle cx="6" cy="6" r="3.500" fill="none" stroke="#e2e5e9" stroke-width="2.500"/><path stroke="#e2e5e9" stroke-width="2" d="M6 0v2M6 10v2M0 6h2M10 6h2M2 2l1 1M9 9l1 1M10 2L9 3M3 9l-1 1"/></symbol>
  <symbol id="s-plus" viewBox="0 0 12 12"><path class="ws" stroke-width="1.500" d="M6 1v10M1 6h10"/></symbol>
  <symbol id="s-unit" viewBox="0 0 12 12"><path class="w" d="M3 0h5v12H3z"/><path class="ks" d="M5 3h3M5 6h3M5 9h3"/></symbol>
  <symbol id="s-prop" viewBox="0 0 12 12"><path class="ws" d="M2 1h8v10H2zM2 3h8M4 5.500h1M6 5.500h2M4 8h1M6 8h2"/></symbol>
  <symbol id="s-ui" viewBox="0 0 12 12"><path class="ws" d="M1 1h10v7H1z"/><path class="w" d="M6 6h5l-2 5H7z"/></symbol>
  <symbol id="s-iso2" viewBox="0 0 12 12"><path class="ws" d="M1 1h4v4H1zM7 2h4v3H7zM4 7l3 4H2z"/><circle class="ws" cx="9" cy="9" r="2"/></symbol>
  <symbol id="s-hw" viewBox="0 0 12 12"><path fill="#1d62b5" d="M0 0h12v12H0z"/><path stroke="#3f8fe0" fill="none" d="M2 2h4v7H2z"/><circle stroke="#3f8fe0" fill="none" cx="7" cy="7" r="2.500"/></symbol>
  <symbol id="s-l2" viewBox="0 0 12 12"><path class="ds" d="M1 4h10M1 8h10"/></symbol>
  <symbol id="s-l4" viewBox="0 0 12 12"><path class="ds" d="M1 3h10M1 5h10M1 7h10M1 9h10"/></symbol>
  <symbol id="s-l3" viewBox="0 0 12 12"><path class="ws" d="M1 3h10M1 8h10"/></symbol>
  <symbol id="s-lx" viewBox="0 0 12 12"><path class="ds" d="M4 2h7M4 6h7M4 10h7M1 1v4M1 9h2"/></symbol>
  <symbol id="s-clean" viewBox="0 0 12 12"><circle class="ws" cx="6" cy="6" r="4.500"/><path class="ws" d="M4 8l4-4"/></symbol>
  <symbol id="s-full" viewBox="0 0 12 12"><path class="ws" d="M1 2h10v8H1z"/><path class="w" d="M7 3h3v3zM2 9h3L2 6z"/></symbol>
  <symbol id="s-menu" viewBox="0 0 12 12"><path class="ws" stroke-width="1.500" d="M1 2h10M1 6h10M1 10h10"/></symbol>
</svg>

<div class="window">
  <header class="head">
    <button class="logo" aria-label="应用程序菜单"><svg viewBox="0 0 16 20"><path fill="#c8242b" d="M0 19L6 1h5l5 18h-4l-2-5H5l-1 5z"/><path fill="#222933" d="M6 11l2-6 2 6z"/><path fill="#8c151b" d="M0 19l5-5-1 5zM11 1l5 18h-4z"/></svg></button>
    <div class="titlebar">
      <nav class="quick" aria-label="快速访问">
        <button aria-label="新建"><svg><use href="#new"/></svg></button><button aria-label="打开"><svg><use href="#open"/></svg></button><button aria-label="保存"><svg><use href="#save"/></svg></button><button aria-label="另存为"><svg><use href="#saveas"/></svg></button><button aria-label="从网络打开"><svg><use href="#webopen"/></svg></button><button aria-label="保存到网络"><svg><use href="#websave"/></svg></button><button aria-label="打印"><svg><use href="#print"/></svg></button><button aria-label="放弃"><svg><use href="#undo"/></svg></button><i class="dn"></i><button aria-label="重做"><svg><use href="#redo"/></svg></button><i class="dn"></i><i class="dn wide"></i>
      </nav>
      <h1 class="title"><span>T20天正建筑软件 V7.0 For Autodesk AutoCAD 2021</span><span>Drawing1.dwg</span></h1>
      <div class="account">
        <i class="rt"></i><input class="search" type="text" placeholder="键入关键字或短语" aria-label="搜索">
        <button aria-label="查找"><svg><use href="#find"/></svg></button>
        <button class="login"><svg><use href="#user"/></svg>登录</button>
        <i class="dn"></i><button aria-label="商店"><svg><use href="#cart"/></svg></button><button aria-label="Autodesk"><svg><use href="#auto"/></svg></button><i class="dn"></i><span class="vsep"></span><button class="mid" aria-label="帮助"><svg><use href="#help"/></svg></button><i class="dn"></i>
      </div>
      <div class="wbtns"><button aria-label="最小化"><svg><use href="#min"/></svg></button><button aria-label="最大化"><svg><use href="#max"/></svg></button><button aria-label="关闭"><svg><use href="#close"/></svg></button></div>
    </div>
    <nav class="tabs" aria-label="功能区">
      <button class="on">默认</button><button>插入</button><button>注释</button><button>参数化</button><button>视图</button><button>管理</button><button>输出</button><button>附加模块</button><button>协作</button><button>精选应用</button><button>天正建筑</button><button class="media" aria-label="显示选项"><b></b><i class="dn"></i></button>
    </nav>
  </header>

  <section class="ribbon">
    <section class="panel p-draw">
      <div class="tools">
        <button class="big"><svg><use href="#line"/></svg>直线</button><button class="big"><svg><use href="#pline"/></svg>多段线</button><button class="big"><svg><use href="#circle"/></svg>圆<i class="dn"></i></button><button class="big"><svg><use href="#arc"/></svg>圆弧<i class="dn"></i></button>
        <div class="col"><button aria-label="矩形"><svg><use href="#rect"/></svg><i class="dn"></i></button><button aria-label="椭圆"><svg><use href="#ellipse"/></svg><i class="dn"></i></button><button aria-label="图案填充"><svg><use href="#hatch"/></svg><i class="dn"></i></button></div>
      </div><h2>绘图<i class="dn"></i></h2>
    </section>
    <section class="panel p-mod">
      <div class="tools">
        <div class="col"><button><svg><use href="#move"/></svg>移动</button><button><svg><use href="#copy"/></svg>复制</button><button><svg><use href="#stretch"/></svg>拉伸</button></div>
        <div class="col"><button><svg><use href="#rotate"/></svg>旋转</button><button><svg><use href="#mirror"/></svg>镜像</button><button><svg><use href="#scale"/></svg>缩放</button></div>
        <div class="col"><button><svg><use href="#trim"/></svg>修剪<i class="dn far"></i></button><button><svg><use href="#fillet"/></svg>圆角<i class="dn far"></i></button><button><svg><use href="#array"/></svg>阵列<i class="dn far"></i></button></div>
        <div class="col"><button aria-label="删除"><svg><use href="#erase"/></svg></button><button aria-label="分解"><svg><use href="#explode"/></svg></button><button aria-label="偏移"><svg><use href="#offset"/></svg></button></div>
      </div><h2>修改<i class="dn"></i></h2>
    </section>
    <section class="panel p-ann">
      <div class="tools">
        <button class="big"><svg><use href="#bigA"/></svg>文字<i class="dn"></i></button><button class="big"><svg><use href="#dim"/></svg>标注</button>
        <div class="col"><button><svg><use href="#dimlin"/></svg>线性<i class="dn"></i></button><button><svg><use href="#leader"/></svg>引线<i class="dn"></i></button><button><svg><use href="#table"/></svg>表格</button></div>
      </div><h2>注释<i class="dn"></i></h2>
    </section>
    <section class="panel p-lay">
      <div class="tools">
        <button class="big"><svg><use href="#layers"/></svg>图层<br>特性</button>
        <div class="col grow">
          <div class="combo"><svg><use href="#bulb"/></svg><svg><use href="#sun"/></svg><svg><use href="#unlock"/></svg><svg><use href="#white"/></svg><select aria-label="图层"><option>0</option></select><i class="dn"></i></div>
          <div class="icons"><button aria-label="关闭图层"><svg><use href="#lay-b"/></svg></button><button aria-label="隔离"><svg><use href="#lay-m"/></svg></button><button aria-label="冻结"><svg><use href="#lay-f"/></svg></button><button aria-label="锁定"><svg><use href="#lay-l"/></svg></button><button><svg><use href="#lay-c"/></svg>置为当前</button></div>
          <div class="icons"><button aria-label="打开所有图层"><svg><use href="#lay-y"/></svg></button><button aria-label="取消隔离"><svg><use href="#lay-m"/></svg></button><button aria-label="解冻"><svg><use href="#lay-s"/></svg></button><button aria-label="解锁"><svg><use href="#lay-u"/></svg></button><button><svg><use href="#lay-y"/></svg>匹配图层</button></div>
        </div>
      </div><h2>图层<i class="dn"></i></h2>
    </section>
    <section class="panel p-blk">
      <div class="tools">
        <button class="big"><svg><use href="#insert"/></svg>插入<i class="dn"></i></button>
        <div class="col"><button><svg><use href="#create"/></svg>创建</button><button><svg><use href="#edit"/></svg>编辑</button><button><svg><use href="#attr"/></svg>编辑属性<i class="dn"></i></button></div>
      </div><h2>块<i class="dn"></i></h2>
    </section>
    <section class="panel p-prop">
      <div class="tools">
        <button class="big"><svg><use href="#match"/></svg>特性<br>匹配</button>
        <div class="col grow">
          <div class="prop"><svg><use href="#wheel"/></svg><div class="combo"><svg><use href="#white"/></svg><select aria-label="对象颜色"><option>ByLayer</option></select><i class="dn"></i></div></div>
          <div class="prop"><svg><use href="#lw"/></svg><div class="combo"><span class="rule"></span><select aria-label="线宽"><option>ByLayer</option></select><i class="dn"></i></div></div>
          <div class="prop"><svg><use href="#lt"/></svg><div class="combo"><span class="rule"></span><select aria-label="线型"><option>ByLayer</option></select><i class="dn"></i></div></div>
        </div>
      </div><h2>特性<i class="dn"></i></h2>
    </section>
    <section class="panel p-grp">
      <div class="tools">
        <button class="big"><svg><use href="#group"/></svg>组</button>
        <div class="col"><button aria-label="解除编组"><svg><use href="#ungroup"/></svg></button><button aria-label="组编辑"><svg><use href="#gedit"/></svg></button><button class="sel" aria-label="启用组选择"><svg><use href="#gsel"/></svg></button></div>
      </div><h2>组<i class="dn"></i></h2>
    </section>
    <section class="panel p-util">
      <div class="tools">
        <button class="big"><svg><use href="#ruler"/></svg>测量<i class="dn"></i></button>
        <div class="col"><button aria-label="快速选择"><svg><use href="#qsel"/></svg></button><button aria-label="全部选择"><svg><use href="#selall"/></svg></button><button aria-label="计算器"><svg><use href="#calc"/></svg></button></div>
      </div><h2>实用工具<i class="dn"></i></h2>
    </section>
    <section class="panel p-clip">
      <div class="tools">
        <button class="big"><svg><use href="#paste"/></svg>粘贴<i class="dn"></i></button>
        <div class="col"><button aria-label="剪切"><svg><use href="#cut"/></svg></button><button aria-label="复制到剪贴板"><svg><use href="#copyclip"/></svg></button></div>
      </div><h2>剪贴板</h2>
    </section>
    <section class="panel p-view">
      <div class="tools"><button class="big"><svg><use href="#base"/></svg>基点<i class="dn"></i></button></div><h2>视图<i class="dn"></i><i class="corner"></i></h2>
    </section>
  </section>

  <main class="work">
    <aside class="palette">
      <h2><span class="grip"></span>T...</h2>
      <ul>
        <li><button>设 置</button></li><li><button>轴网柱子</button></li><li><button>墙 体</button></li><li><button>门 窗</button></li><li><button>房间屋顶</button></li><li><button>楼梯其他</button></li><li><button>立 面</button></li><li><button>剖 面</button></li><li><button>文字表格</button></li><li><button>尺寸标注</button></li><li><button>符号标注</button></li><li><button>图层控制</button></li><li><button>工 具</button></li><li><button>图块图案</button></li><li><button>建筑防火</button></li><li><button>场地布置</button></li><li><button>三维建模</button></li><li><button>文件布图</button></li><li><button>其 它</button></li><li><button>数据中心</button></li><li><button>帮助演示</button></li><li class="auth"><button>授权信息</button></li>
      </ul>
    </aside>

    <div class="canvas">
      <p class="vplabel">[−][俯视][二维线框]</p>

      <div class="bar b1"><span class="grip"></span>
        <button aria-label="绘制轴网"><svg><use href="#t-grid"/></svg></button><button aria-label="轴网标注"><svg><use href="#t-col"/></svg></button><button aria-label="添补轴号"><svg><use href="#t-col2"/></svg></button><button aria-label="标准柱"><svg><use href="#t-pick"/></svg></button><hr>
        <button aria-label="绘制墙体"><svg><use href="#t-wall"/></svg></button><button aria-label="等分加墙"><svg><use href="#t-box"/></svg></button><button aria-label="净距偏移"><svg><use href="#t-perp"/></svg></button><button aria-label="边线对齐"><svg><use href="#t-side"/></svg></button><button aria-label="门窗"><svg><use href="#t-door"/></svg></button><button aria-label="节点"><svg><use href="#t-node"/></svg></button><hr>
        <button aria-label="格式刷"><svg><use href="#t-brush"/></svg></button><button aria-label="修墙角"><svg><use href="#t-brush2"/></svg></button><button aria-label="倒墙角"><svg><use href="#t-brush3"/></svg></button><hr>
        <button aria-label="门窗标注"><svg><use href="#t-dim"/></svg></button><button aria-label="墙厚标注"><svg><use href="#t-dimr"/></svg></button><button aria-label="逐点标注"><svg><use href="#t-dimk"/></svg></button><button aria-label="弧长标注"><svg><use href="#t-arck"/></svg></button><button aria-label="角度标注"><svg><use href="#t-ang"/></svg></button><button aria-label="快速标注"><svg><use href="#t-green"/></svg></button><hr>
        <button aria-label="自由移动"><svg><use href="#t-snap"/></svg></button><button aria-label="自由复制"><svg><use href="#t-flower"/></svg></button><button aria-label="移位"><svg><use href="#t-move"/></svg></button><button aria-label="对象编辑"><svg><use href="#t-paint"/></svg></button><button class="x" aria-label="关闭"></button>
      </div>

      <div class="bar b2"><span class="grip"></span>
        <button aria-label="图层管理"><svg><use href="#t-cube"/></svg></button><button aria-label="图层转换"><svg><use href="#t-swap"/></svg></button><hr>
        <button aria-label="关闭图层"><svg><use href="#t-bulbb"/></svg></button><button aria-label="关闭其它"><svg><use href="#t-bulbp"/></svg></button><button aria-label="打开图层"><svg><use href="#t-bulby"/></svg></button><button aria-label="图层全开"><svg><use href="#t-bulbl"/></svg></button><button aria-label="冻结图层"><svg><use href="#t-snow"/></svg></button><button aria-label="冻结其它"><svg><use href="#t-snowp"/></svg></button><button aria-label="解冻图层"><svg><use href="#t-sun"/></svg></button><button aria-label="锁定图层"><svg><use href="#t-lock"/></svg></button><button aria-label="锁定其它"><svg><use href="#t-lockp"/></svg></button><button aria-label="解锁图层"><svg><use href="#t-key"/></svg></button><button aria-label="合并图层"><svg><use href="#t-cube"/></svg></button><button aria-label="图层恢复"><svg><use href="#t-swap"/></svg></button><button aria-label="图元改层"><svg><use href="#t-pal"/></svg></button><button class="x" aria-label="关闭"></button>
      </div>

      <div class="bar b3"><span class="grip"></span>
        <button aria-label="设置"><svg><use href="#t-man"/></svg></button><button aria-label="查找"><svg><use href="#t-zoom"/></svg></button><hr>
        <button aria-label="门窗"><svg><use href="#t-win"/></svg></button><button aria-label="组合门窗"><svg><use href="#t-wing"/></svg></button><hr>
        <button aria-label="直线梯段"><svg><use href="#t-st1"/></svg></button><button aria-label="圆弧梯段"><svg><use href="#t-st1"/></svg></button><button aria-label="阳台"><svg><use href="#t-beam"/></svg></button><button aria-label="坡道"><svg><use href="#t-st2"/></svg></button><button aria-label="多行文字"><svg><use href="#t-txt"/></svg></button><button aria-label="标高"><svg><use href="#t-tri"/></svg></button><button aria-label="剖切"><svg><use href="#t-blue"/></svg></button><button aria-label="引出标注"><svg><use href="#t-pen"/></svg></button><button aria-label="图名标注"><svg><use href="#t-ai"/></svg></button><hr>
        <button aria-label="新建表格"><svg><use href="#t-tbl"/></svg></button><button aria-label="单元编辑"><svg><use href="#t-strip"/></svg></button><button aria-label="屋顶"><svg><use href="#t-roof"/></svg></button><button aria-label="门套"><svg><use href="#t-gate"/></svg></button><hr>
        <button aria-label="局部隐藏"><svg><use href="#t-eyer"/></svg></button><button aria-label="编辑"><svg><use href="#t-note"/></svg></button><button aria-label="恢复可见"><svg><use href="#t-eye"/></svg></button><hr>
        <button aria-label="图块"><svg><use href="#t-blk"/></svg></button><button aria-label="图框"><svg><use href="#t-sq"/></svg></button><button aria-label="清理"><svg><use href="#t-gold"/></svg></button><button class="x" aria-label="关闭"></button>
      </div>

      <div class="bar b4"><span class="grip"></span>
        <button aria-label="工程管理"><svg><use href="#t-mgr"/></svg></button><button aria-label="图纸编辑"><svg><use href="#t-note"/></svg></button><button aria-label="图层"><svg><use href="#t-cube"/></svg></button><button aria-label="轴网"><svg><use href="#t-grid"/></svg></button><button aria-label="轴标"><svg><use href="#t-col"/></svg></button><button aria-label="单轴标"><svg><use href="#t-col2"/></svg></button><button aria-label="柱子"><svg><use href="#t-node"/></svg></button><button aria-label="墙体"><svg><use href="#t-box"/></svg></button><button aria-label="单线变墙"><svg><use href="#t-line"/></svg></button><button aria-label="平开门"><svg><use href="#t-door"/></svg></button><button aria-label="门窗编号"><svg><use href="#t-red"/></svg></button><button aria-label="门窗检查"><svg><use href="#t-redp"/></svg></button><button aria-label="双窗"><svg><use href="#t-win"/></svg></button><button aria-label="门口线"><svg><use href="#t-frame"/></svg></button><button aria-label="装饰套"><svg><use href="#t-frame2"/></svg></button><button aria-label="房间"><svg><use href="#t-mail"/></svg></button><button aria-label="房屋"><svg><use href="#t-house"/></svg></button><button aria-label="铅笔"><svg><use href="#t-pencil"/></svg></button><button aria-label="图纸"><svg><use href="#t-pages"/></svg></button><button aria-label="插图"><svg><use href="#t-blk"/></svg></button><button aria-label="引出"><svg><use href="#t-pen"/></svg></button><button aria-label="做法"><svg><use href="#t-txt"/></svg></button><button aria-label="索引"><svg><use href="#t-tri"/></svg></button><button aria-label="指北针"><svg><use href="#t-wheel"/></svg></button><button aria-label="帮助"><svg><use href="#t-q"/></svg></button><button class="x" aria-label="关闭"></button>
      </div>

      <div class="bar b5"><span class="grip"></span>
        <button aria-label="前置"><svg><use href="#t-ordA"/></svg></button><button aria-label="后置"><svg><use href="#t-ordA"/></svg></button><button aria-label="置于对象之上"><svg><use href="#t-ordB"/></svg></button><button aria-label="置于对象之下"><svg><use href="#t-ordB"/></svg></button><hr>
        <button aria-label="左对齐"><svg><use href="#t-alL"/></svg></button><button aria-label="居中"><svg><use href="#t-alC"/></svg></button><button aria-label="右对齐"><svg><use href="#t-alC"/></svg></button><hr>
        <button aria-label="顶对齐"><svg><use href="#t-alT"/></svg></button><button aria-label="底对齐"><svg><use href="#t-alB"/></svg></button><button aria-label="中线对齐"><svg><use href="#t-alB"/></svg></button><hr>
        <button aria-label="等距"><svg><use href="#t-rows"/></svg></button><button aria-label="列表"><svg><use href="#t-list"/></svg></button><button aria-label="平行"><svg><use href="#t-par"/></svg></button><button class="x" aria-label="关闭"></button>
      </div>

      <svg class="cross" viewBox="0 0 44 56"><path class="ws" d="M0 27.500h13M18 27.500h25M15.500 0v25M15.500 30v25M13.500 25.500h4v4h-4z"/></svg>

      <div class="note"><p>公众号: CAD管家</p><p>官网: <span>www.cadgj.cn</span></p></div>

      <svg class="ucs" viewBox="0 0 44 46"><path class="ws" d="M3.500 12v27h27M1.500 36.500h5v5h-5zM4 1l3.500 4L11 1M7.500 5v5M33 31l8 8M41 31l-8 8"/></svg>

      <button class="upload"><svg viewBox="0 0 18 14"><circle cx="9" cy="5" r="2.500"/><circle cx="5.500" cy="9" r="2.500"/><circle cx="12.500" cy="9" r="2.500"/></svg><span>拖拽上传</span></button>
      <div class="docbtns"><button aria-label="最小化视口"><svg><use href="#min"/></svg></button><button aria-label="还原视口"><svg><use href="#rest"/></svg></button><button aria-label="关闭视口"><svg><use href="#close"/></svg></button></div>

      <div class="cube">
        <svg viewBox="0 0 80 80"><circle cx="40" cy="40" r="31" fill="none" stroke="#303030" stroke-width="7"/><path fill="#a3a3a3" stroke="#b4b4b4" d="M25.500 25.500h29v29h-29z"/><path fill="#94979c" d="M31 31h18v17H31z"/></svg>
        <span class="n">北</span><span class="s">南</span><span class="wst">西</span><span class="e">东</span><span class="c">上</span>
      </div>
      <button class="wcs">未命名 ▽</button>
      <div class="navbar">
        <svg viewBox="0 0 18 120"><g fill="none" stroke="#2f2f2f"><circle cx="14" cy="4" r="2"/><circle cx="9" cy="17" r="6"/><path d="M6 14h6v6H6zM8 29h2M6 44V38h2v-2h2v2h2v7l-2 3H7l-3-4zM3 51l10 10M13 51L3 61M12 59l3 3M8 68h2M9 72v13M3 78h12M5 75h8v5H5zM8 90h2M3 97h5v3H3zM9 97h5v3H9zM3 102h9v8H3z"/><path d="M6 104l4 2-4 2z" fill="#2f2f2f"/><circle cx="14" cy="116" r="2"/></g></svg>
      </div>
      <div class="sidetab"></div>

      <div class="cmd">
        <span class="grip"></span><button aria-label="关闭命令行"><svg><use href="#close"/></svg></button><button aria-label="自定义"><svg viewBox="0 0 12 12"><path d="M2 11l5-6" stroke="#dfe2e6" stroke-width="2"/><path class="w" d="M6 5l1-4 2 1-1 2 2 1 2-2v3L9 8z"/></svg></button>
        <label class="entry"><svg viewBox="0 0 12 12"><path fill="none" stroke="#3c3c3c" d="M1 2.500h10v8H1zM1 4.500h10M3 6l2 1-2 1M6 9h3"/></svg><i class="dn"></i><input type="text" placeholder="键入命令" aria-label="命令"><i class="up"></i></label>
      </div>
    </div>
  </main>

  <footer class="status">
    <nav class="layouts"><button class="on">模型</button><button>布局1</button><button>布局2</button><button class="plus">+</button></nav>
    <div class="stat">
      <button class="scale">比例 1:100<i class="dn"></i></button><span class="coords">1832, 33206, 0</span><button class="model">模型</button>
      <button aria-label="栅格"><svg><use href="#s-grid"/></svg></button><button aria-label="捕捉"><svg><use href="#s-dots"/></svg></button><i class="dn"></i><button aria-label="推断约束"><svg><use href="#s-infer"/></svg></button><button class="act" aria-label="动态输入"><svg><use href="#s-dyn"/></svg></button><button aria-label="正交"><svg><use href="#s-ortho"/></svg></button><button class="act" aria-label="极轴"><svg><use href="#s-polar"/></svg></button><i class="dn"></i><button aria-label="等轴测"><svg><use href="#s-iso"/></svg></button><i class="dn"></i><button class="act" aria-label="对象追踪"><svg><use href="#s-track"/></svg></button><button class="act" aria-label="对象捕捉"><svg><use href="#s-osnap"/></svg></button><i class="dn"></i><button aria-label="线宽"><svg><use href="#s-lw"/></svg></button><button class="act" aria-label="透明度"><svg><use href="#s-trans"/></svg></button><button aria-label="选择循环"><svg><use href="#s-cyc"/></svg></button><button aria-label="三维捕捉"><svg><use href="#s-cube"/></svg></button><i class="dn"></i><button class="act" aria-label="动态UCS"><svg><use href="#s-ucs"/></svg></button><button aria-label="选择过滤"><svg><use href="#s-cube"/></svg></button><i class="dn"></i><button class="act" aria-label="小控件"><svg><use href="#s-giz"/></svg></button><i class="dn"></i><button class="act" aria-label="注释可见性"><svg><use href="#s-annp"/></svg></button><button aria-label="自动缩放"><svg><use href="#s-annp"/></svg></button><button aria-label="注释比例"><svg><use href="#s-ann"/></svg></button>
      <button class="txt">1:1 / 100%</button><i class="dn"></i><button aria-label="切换工作空间"><svg><use href="#s-gear"/></svg></button><i class="dn"></i><button aria-label="注释监视器"><svg><use href="#s-plus"/></svg></button><button aria-label="单位"><svg><use href="#s-unit"/></svg></button><button class="txt unit">小数</button><i class="dn"></i><button aria-label="快捷特性"><svg><use href="#s-prop"/></svg></button><button aria-label="锁定界面"><svg><use href="#s-ui"/></svg></button><i class="dn"></i><button aria-label="隔离对象"><svg><use href="#s-iso2"/></svg></button><button aria-label="硬件加速"><svg><use href="#s-hw"/></svg></button><button aria-label="编组"><svg><use href="#s-l2"/></svg></button><button aria-label="填充"><svg><use href="#s-l4"/></svg></button><button aria-label="加粗"><svg><use href="#s-l3"/></svg></button><button aria-label="动态标注"><svg><use href="#s-lx"/></svg></button><button class="act" aria-label="清理屏幕"><svg><use href="#s-clean"/></svg></button><button aria-label="全屏"><svg><use href="#s-full"/></svg></button><button aria-label="自定义"><svg><use href="#s-menu"/></svg></button>
    </div>
  </footer>
</div>
</body>
</html>
```
FILE: styles.css
```css
* { box-sizing: border-box; margin: 0; padding: 0; }
html, body { height: 100%; }
body { background: #222933; color: #d6dae0; font: 7px/9px "Noto Sans", "Noto Sans CJK SC", sans-serif; overflow: hidden; }
button, input, select { font: inherit; color: inherit; background: none; border: 0; border-radius: 0; appearance: none; outline: 0; }
button { white-space: nowrap; }
svg { display: block; width: 12px; height: 12px; flex: none; overflow: visible; }
ul { list-style: none; }
h1, h2 { font: inherit; }
.sprite { position: absolute; width: 0; height: 0; }

/* icon inks */
.w { fill: #d9dce1; }
.b { fill: #6db3e8; }
.y { fill: #f2c46c; }
.r { fill: #e0453f; }
.g { fill: #56b98a; }
.k { fill: #222933; }
.d { fill: #77808e; }
.l { fill: #a9c3dd; }
.ws, .bs, .ys, .rs, .gs, .ks, .ds, .ps { fill: none; }
.ws { stroke: #d9dce1; }
.bs { stroke: #6db3e8; }
.ys { stroke: #f2c46c; }
.rs { stroke: #c8323a; }
.gs { stroke: #4bb086; }
.ks { stroke: #20262f; }
.ds { stroke: #8b95a4; }
.ps { stroke: #a86ac4; }

/* small direction marks */
.dn, .up { flex: none; display: grid; place-items: center; width: 9px; height: 3px; }
.dn::before, .up::before { content: ""; border: 2px solid transparent; }
.dn::before { border-top: 3px solid #c9ced6; border-bottom: 0; }
.up::before { border-bottom: 3px solid #444; border-top: 0; }
.rt { flex: none; width: 4px; height: 4px; border: 2px solid transparent; border-left-color: #c9ced6; }
.tools .big .dn::before, .tools .col button .dn::before, .titlebar .dn::before { border-width: 2px 1px 0; }
.corner { width: 3px; height: 3px; margin-left: 3px; background: #c9ced6; }
.grip { flex: none; width: 2px; height: 8px; background: repeating-linear-gradient(#8790a0 0 1px, transparent 1px 3px); }

.window { display: flex; flex-direction: column; height: 100%; border: solid #7fc6dc; border-width: 2px 2px 1px 3px; }

/* header */
.head { display: grid; grid-template-columns: 26px 1fr; grid-template-rows: 15px 11px; background: #222933; }
.logo { grid-row: 1 / 3; display: grid; place-items: center; }
.logo svg { width: 15px; height: 19px; }
.titlebar { display: flex; align-items: center; }
.titlebar svg { width: 11px; height: 11px; }
.titlebar button, .quick, .account, .wbtns { display: flex; align-items: center; }
.quick button { width: 14px; height: 14px; justify-content: center; }
.quick .dn { width: 5px; }
.quick .wide { width: 12px; }
.title { flex: 1; display: flex; justify-content: center; gap: 9px; color: #e4e7eb; white-space: nowrap; }
.search { width: 100px; height: 12px; padding: 0 2px; margin: 0 2px 0 3px; background: #444e5f; font-style: italic; }
.search::placeholder { color: #c3c9d2; opacity: 1; }
.login { gap: 1px; margin-right: 28px; }
.account > button { padding: 0 1px; }
.account .login { padding: 0 2px; }
.account .dn { width: 7px; }
.account .mid { margin-left: 3px; }
.vsep { width: 1px; height: 10px; background: #3a4250; }
.wbtns { margin: 0 3px 0 7px; }
.wbtns button { width: 14px; justify-content: center; }
.wbtns svg { width: 10px; height: 10px; }
.tabs { display: flex; }
.tabs button { padding: 0 5px; margin-right: 1px; line-height: 10px; color: #bcc3cd; }
.tabs .on { background: #3b4453; color: #fff; }
.tabs .media { display: flex; align-items: center; margin-left: 6px; }
.media b { width: 9px; height: 5px; background: #e2e5e9; border: 1px solid #fff; }

/* ribbon */
.ribbon { display: flex; background: #3b4453; height: 57px; flex: none; border-bottom: 1px solid #2b323e; }
.panel { flex: none; display: flex; flex-direction: column; border-right: 1px solid #2b323e; }
.panel h2 { height: 12px; display: flex; align-items: center; justify-content: center; gap: 1px; background: #394250; }
.tools { flex: 1; display: flex; align-items: flex-start; padding-top: 3px; }
.big { width: 23px; display: flex; flex-direction: column; align-items: center; line-height: 9px; }
.big svg { width: 20px; height: 21px; }
.big .dn { margin-top: 1px; }
.col { display: grid; grid-auto-rows: 13px; align-items: center; }
.col button { display: flex; align-items: center; gap: 1px; height: 12px; }
.col svg { width: 12px; height: 11px; }
.grow { flex: 1; }
.far { margin-left: 3px; }
.p-draw { width: 119px; }
.p-draw .col { margin-left: 4px; }
.p-mod { width: 129px; }
.p-mod .tools { padding-left: 3px; justify-content: space-between; padding-right: 4px; }
.p-ann { width: 87px; }
.p-ann .big { width: 25px; }
.p-lay { width: 141px; }
.p-blk { width: 76px; }
.p-blk .big { width: 24px; }
.p-prop { width: 137px; }
.p-grp { width: 39px; }
.p-grp .col { margin-left: 1px; }
.p-util { width: 43px; }
.p-util .big { width: 27px; }
.p-clip { width: 41px; }
.p-clip .big { width: 27px; }
.p-view { flex: 1; border: 0; }
.p-view h2 { justify-content: flex-start; padding-left: 4px; }
.p-view .big { width: 36px; }
.combo { display: flex; align-items: center; height: 12px; flex: 1; padding-left: 1px; margin-right: 1px; background: #4c586b; border: 1px solid #566276; gap: 1px; }
.combo svg { width: 10px; height: 10px; }
.combo select { flex: 1; min-width: 0; padding-left: 3px; }
.rule { width: 36px; height: 1px; background: #c3c8d0; }
.icons { display: flex; gap: 1px; }
.prop { display: flex; gap: 4px; align-items: center; }
.prop .combo > svg { margin-left: 1px; }
.prop .combo > svg + select { padding-left: 7px; }
.combo .dn { width: 7px; }
.sel { background: #35637f; box-shadow: 0 0 0 1px #6db3e8; }

/* workspace */
.work { flex: 1; display: flex; min-height: 0; }
.palette { width: 44px; background: #f0f0f0; border-left: 1px solid #303845; color: #1c1c1c; }
.palette h2 { display: flex; align-items: center; gap: 5px; height: 16px; padding-left: 3px; background: #3b4453; color: #d6dae0; margin-bottom: 3px; }
.palette li { position: relative; height: 10px; padding-left: 15px; }
.palette li::before { content: ""; position: absolute; left: 4px; top: 2px; border: 3px solid transparent; border-left: 4px solid #2f6ca5; border-right: 0; }
.palette button { display: block; width: 28px; height: 10px; line-height: 10px; text-align: left; text-align-last: justify; }
.palette .auth::before { left: 3px; width: 7px; height: 6px; border: 0; background: linear-gradient(#356fb0 0 3px, #d44 3px); }
.canvas { flex: 1; position: relative; background: #000; overflow: hidden; }
.vplabel { padding: 3px 2px; line-height: 9px; color: #e0e0e0; }

.bar { position: absolute; display: flex; align-items: center; height: 13px; padding-left: 1px; background: #3a4454; }
.bar .grip { margin-right: 1px; }
.bar button { width: 13px; height: 13px; display: grid; place-items: center; }
.bar svg { width: 11px; height: 11px; }
.bar hr { width: 1px; height: 10px; margin: 0 1px; border: 0; background: #66707f; }
.bar .x { width: 4px; height: 4px; align-self: flex-start; background: #cfd3d9; margin-top: 1px; }
.b1 { left: 59px; top: 10px; }
.b2 { left: 66px; top: 27px; }
.b3 { left: 79px; top: 52px; }
.b4 { left: 83px; top: 124px; }
.b5 { left: 79px; top: 141px; }

.cross { position: absolute; left: 0; top: 89px; width: 44px; height: 56px; }
.note { position: absolute; left: 411px; top: 188px; font: 16px/19px "Liberation Mono", "Noto Sans CJK SC", monospace; color: #e6e6e6; white-space: nowrap; }
.note span { font-size: 15px; }
.ucs { position: absolute; left: 9px; bottom: 5px; width: 44px; height: 46px; }

.upload { position: absolute; right: 44px; top: 5px; display: flex; align-items: stretch; height: 13px; border-radius: 2px; overflow: hidden; background: #c9ebfe; color: #3a9be8; }
.upload svg { width: 16px; height: 13px; background: #2196f3; fill: none; stroke: #fff; stroke-width: 2; }
.upload span { width: 43px; line-height: 13px; }
.docbtns { position: absolute; right: 4px; top: 5px; display: flex; gap: 3px; }
.docbtns svg { width: 8px; height: 8px; stroke-width: 2; }
.cube { position: absolute; right: 8px; top: 20px; width: 80px; height: 80px; font-size: 11px; line-height: 12px; color: #9a9a9a; }
.cube svg { width: 80px; height: 80px; }
.cube span { position: absolute; width: 12px; text-align: center; }
.cube .n { left: 34px; top: 3px; }
.cube .s { left: 34px; top: 67px; }
.cube .wst { left: 2px; top: 35px; }
.cube .e { left: 66px; top: 35px; }
.cube .c { left: 30px; top: 30px; width: 20px; font-size: 16px; line-height: 18px; color: #5c5f66; }
.wcs { position: absolute; right: 32px; top: 109px; width: 32px; height: 10px; border-radius: 2px; background: #85858c; border: 1px solid #a0a0a8; line-height: 8px; color: #66666d; }
.navbar { position: absolute; right: 4px; top: 133px; width: 18px; height: 120px; background: #4a4a4a; border-radius: 2px; }
.navbar svg { width: 18px; height: 120px; }
.sidetab { position: absolute; right: 0; bottom: 27px; width: 3px; height: 31px; background: linear-gradient(#343d4b 0 20px, #4f8f86 20px 28px, #343d4b 28px); }

.cmd { position: absolute; left: 207px; right: 208px; bottom: 0; height: 14px; display: flex; align-items: center; background: #2a303a; }
.cmd > .grip { margin: 0 2px 0 2px; width: 3px; }
.cmd > button { width: 12px; height: 14px; display: grid; place-items: center; }
.cmd > button svg { width: 9px; height: 9px; }
.entry { flex: 1; display: flex; align-items: center; align-self: stretch; background: #b4b4b4; padding: 0 1px 0 2px; }
.entry svg { width: 10px; height: 10px; }
.entry .dn::before { border-top-color: #444; }
.entry input { flex: 1; min-width: 0; font-style: italic; }
.entry input::placeholder { color: #4c4c4c; opacity: 1; }

/* status bar */
.status { flex: none; height: 17px; display: flex; justify-content: space-between; background: #222933; }
.layouts { display: flex; padding-left: 7px; gap: 1px; height: 12px; }
.layouts button { padding: 0 6px; line-height: 11px; background: #2e3643; border-radius: 0 0 4px 4px; color: #b9c0ca; }
.layouts .on { background: #3f4a5b; color: #fff; font-weight: bold; }
.layouts .plus { padding: 0 4px; }
.stat { display: flex; align-items: center; align-self: stretch; background: #39424f; margin-right: 4px; color: #eceef1; }
.stat button { width: 14px; height: 13px; display: grid; place-items: center; }
.stat svg { width: 11px; height: 11px; }
.stat .act { background: #5b8fc9; box-shadow: inset 1px 0 #39424f, inset -1px 0 #39424f; }
.stat .txt { width: 33px; }
.stat .unit { justify-items: start; padding-left: 3px; }
.stat .scale { width: 41px; display: flex; align-items: center; }
.coords { width: 82px; padding-right: 5px; border-left: 1px solid #222933; text-align: right; }
.stat .model { font-weight: bold; width: 15px; }
```
